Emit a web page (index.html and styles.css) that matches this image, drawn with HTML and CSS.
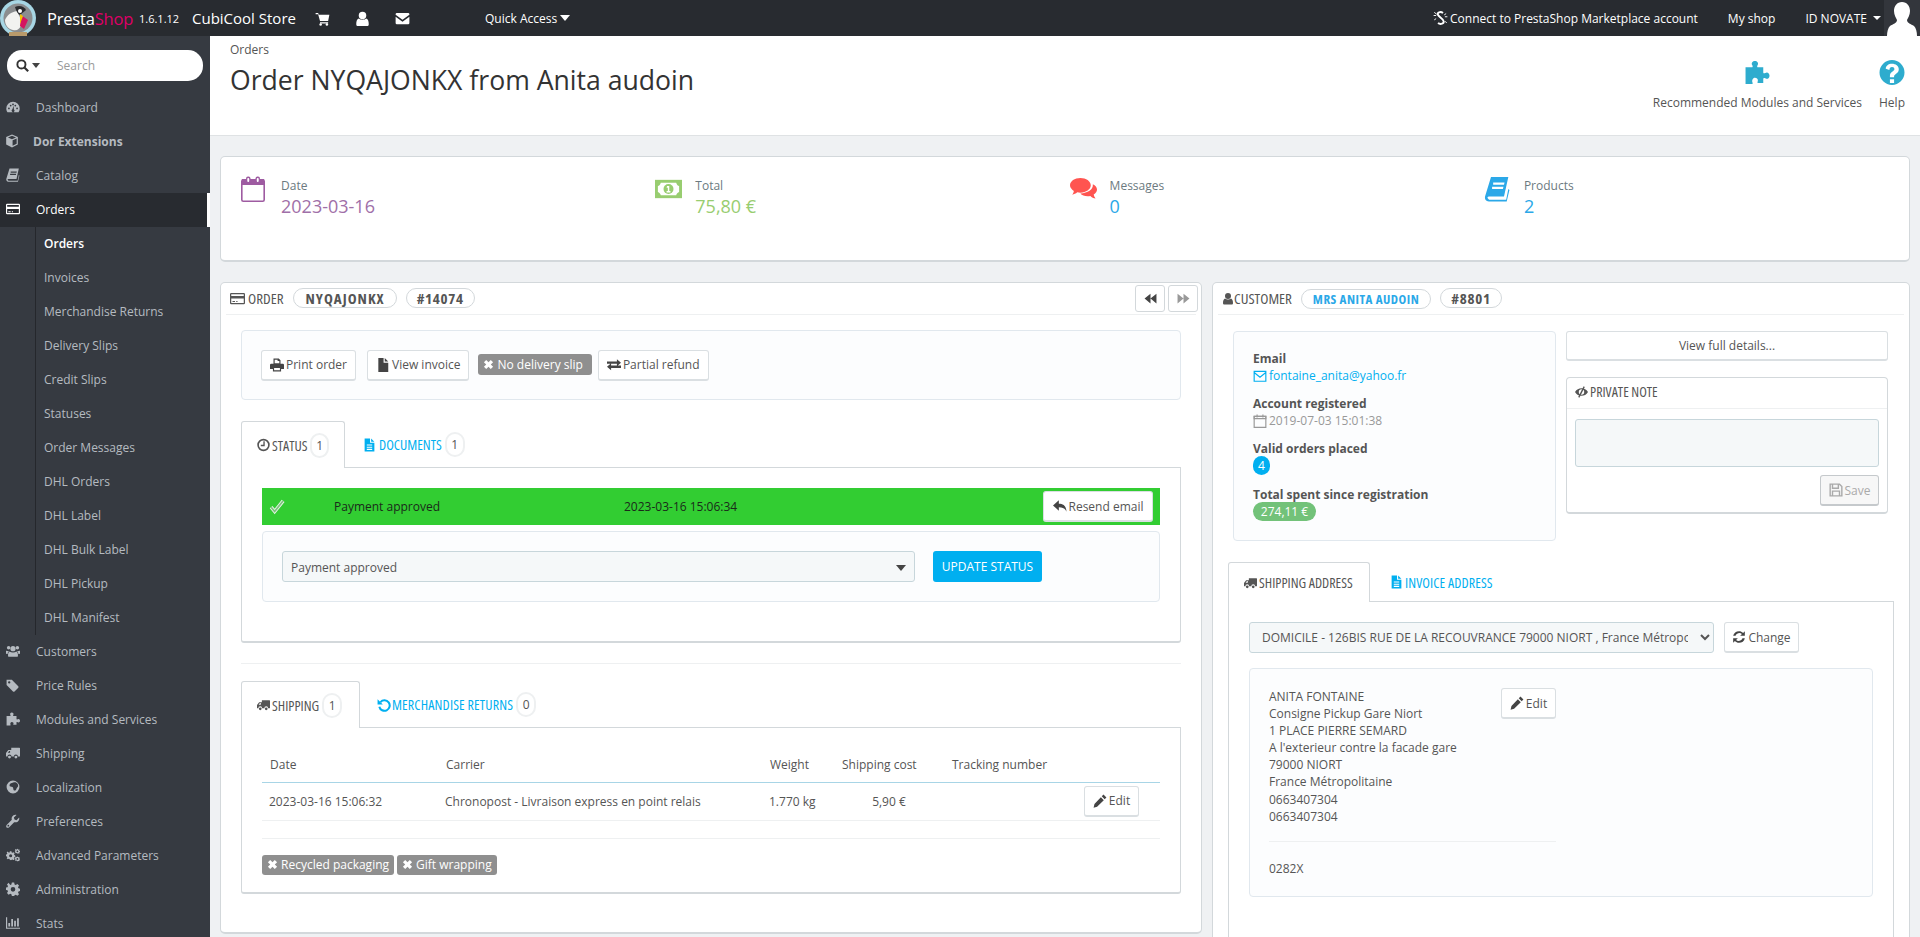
FILE: index.html
```html
<!DOCTYPE html>
<html lang="en">
<head>
<meta charset="utf-8">
<title>Order NYQAJONKX</title>
<link rel="stylesheet" href="styles.css">
</head>
<body>
<svg class="defs" width="0" height="0">
  <defs>
    <symbol id="i-cart" viewBox="0 0 24 24"><path fill="currentColor" d="M1 3h4l1 3h17l-2 10H8L5 5H1zM8 18h13v2H8z"/><circle fill="currentColor" cx="9" cy="21.5" r="2"/><circle fill="currentColor" cx="19" cy="21.5" r="2"/></symbol>
    <symbol id="i-user" viewBox="0 0 24 24"><circle fill="currentColor" cx="12" cy="7" r="6"/><path fill="currentColor" d="M6 12c3 2.500 9 2.500 12 0 3 1 4 5 4 9 0 2-1 3-3 3H5c-2 0-3-1-3-3 0-4 1-8 4-9z"/></symbol>
    <symbol id="i-mail" viewBox="0 0 24 24"><path fill="currentColor" d="M3 3h18a2 2 0 0 1 2 2v1L12 14 1 6V5a2 2 0 0 1 2-2zM1 9l11 8 11-8v10a2 2 0 0 1-2 2H3a2 2 0 0 1-2-2z"/></symbol>
    <symbol id="i-mailo" viewBox="0 0 24 24"><path fill="none" stroke="currentColor" stroke-width="2" d="M2 4h20v17H2zM2 6l10 8 10-8"/></symbol>
    <symbol id="i-search" viewBox="0 0 24 24"><circle fill="none" stroke="currentColor" stroke-width="3.500" cx="10" cy="10" r="7.500"/><path stroke="currentColor" stroke-width="4" d="M15.500 15.500l7 7"/></symbol>
    <symbol id="i-dash" viewBox="0 0 24 24"><path fill="currentColor" fill-rule="evenodd" d="M12 3a11.500 11.500 0 0 1 11.500 11.500c0 3-1 5-2 6.500H2.500c-1-1.500-2-3.500-2-6.500A11.500 11.500 0 0 1 12 3zM5 13a1.500 1.500 0 1 0 0 3 1.500 1.500 0 0 0 0-3zm3-5a1.500 1.500 0 1 0 0 3 1.500 1.500 0 0 0 0-3zm8 0a1.500 1.500 0 1 0 0 3 1.500 1.500 0 0 0 0-3zm3 5a1.500 1.500 0 1 0 0 3 1.500 1.500 0 0 0 0-3zM12 6a1.500 1.500 0 1 0 0 3 1.500 1.500 0 0 0 0-3zm1 4l-2 6a2.500 2.500 0 1 0 2.600.2z"/></symbol>
    <symbol id="i-cube" viewBox="0 0 24 24"><path fill="currentColor" d="M12 1l10 4v13l-10 5-10-5V5zm0 2.200L5 6l7 2.800L19 6zM13 10.600v9.600l7-3.500V7.800z"/></symbol>
    <symbol id="i-book" viewBox="0 0 24 24"><path fill="currentColor" d="M6 1h16l-4 18H4c-1 0-1.500 1-1 1.500S4 22 5 22h15l2-10 1 1-2.500 10.500H4c-2.500 0-4-2-3.500-4.500zM8 6v2h10l.5-2zM7 10v2h10l.5-2z"/></symbol>
    <symbol id="i-card" viewBox="0 0 24 24"><path fill="currentColor" fill-rule="evenodd" d="M2 3h20a2 2 0 0 1 2 2v14a2 2 0 0 1-2 2H2a2 2 0 0 1-2-2V5a2 2 0 0 1 2-2zm0 2v3h20V5zm0 7v7h20v-7zm2 4h4v1.500H4zm6 0h2v1.500h-2z"/></symbol>
    <symbol id="i-users" viewBox="0 0 24 24"><circle fill="currentColor" cx="12" cy="8" r="4.500"/><circle fill="currentColor" cx="4.500" cy="6.500" r="3"/><circle fill="currentColor" cx="19.500" cy="6.500" r="3"/><path fill="currentColor" d="M6 13c3 2 9 2 12 0 2 1 2.500 4 2.500 7 0 1.500-1 2-2 2h-13c-1 0-2-.5-2-2 0-3 .5-6 2.500-7zM0 11c1 1 3 1.500 5 1-1.500 1.500-2 3-2.200 5H1c-.5 0-1-.5-1-1.500zM24 11c-1 1-3 1.500-5 1 1.500 1.500 2 3 2.200 5H23c.5 0 1-.5 1-1.500z"/></symbol>
    <symbol id="i-tags" viewBox="0 0 24 24"><path fill="currentColor" fill-rule="evenodd" d="M1 3h9l11 11c.8.8.8 1.800 0 2.600l-6.400 6.400c-.8.8-1.800.8-2.600 0L1 12zm4.500 2.500a2 2 0 1 0 0 4 2 2 0 0 0 0-4z"/></symbol>
    <symbol id="i-puzzle" viewBox="0 0 24 24"><path fill="currentColor" d="M1 7h6c1 0 1-1 .5-2C6 3 8 1 10 1s4 2 2.500 4c-.5 1-.5 2 .5 2h5v5c0 1 1 1 2 .5 2-1.500 4 .5 4 2.500s-2 4-4 2.500c-1-.5-2-.5-2 .5v4h-5c-1 0-.5-1-.2-1.800.5-2-1-3.200-2.800-3.200S7 19.200 7.500 21.200c.3.800.8 1.800-.2 1.800H1z"/></symbol>
    <symbol id="i-truck" viewBox="0 0 24 24"><path fill="currentColor" d="M9 3h14a1 1 0 0 1 1 1v13a1 1 0 0 1-1 1h-2.500a3.500 3.500 0 0 0-7 0H9.500a3.500 3.500 0 0 0-7 0H1a1 1 0 0 1-1-1v-5l4-5h5zM3 11.500h4V8.500H5.500z"/><circle fill="currentColor" cx="6" cy="19" r="2.500"/><circle fill="currentColor" cx="17" cy="19" r="2.500"/></symbol>
    <symbol id="i-globe" viewBox="0 0 24 24"><path fill="currentColor" fill-rule="evenodd" d="M12 1a11 11 0 1 1 0 22 11 11 0 0 1 0-22zm3 3c-2 0-3 1-5 1S6 7 6 9c0 3 3 2 5 3 2 .5 1 3 2 5s3 1 4 0c1-2 1-3 3-5 1-1 1-3 0-5-1-2-3-3-5-3z"/></symbol>
    <symbol id="i-wrench" viewBox="0 0 24 24"><path fill="currentColor" fill-rule="evenodd" d="M22.500 6c1 3-.5 6-3 7.500-2 1-4 1-5.500.5L5.500 22.500c-1.500 1.500-3.500 1.500-4.500.5s-1-3 .5-4.500L10 10c-.5-2-.5-4 .5-5.500C12 2 15 .5 18 1.500L13.500 6l1 3.500 3.500 1zM4 18.500a1.500 1.500 0 1 0 0 3 1.500 1.500 0 0 0 0-3z"/></symbol>
    <symbol id="i-gear" viewBox="0 0 24 24"><path fill="currentColor" fill-rule="evenodd" d="M10 1h4l.7 3.200 2 .8L19.500 3.300l2.800 2.800-1.700 2.700.8 2 3.100.7v4l-3.100.7-.8 2 1.700 2.700-2.800 2.800-2.800-1.700-2 .8L14 24h-4l-.7-3.200-2-.8-2.800 1.700-2.800-2.800 1.700-2.700-.8-2-3.100-.7v-4l3.100-.7.8-2-1.700-2.700 2.800-2.800L7.300 5l2-.8zM12 8.500a4 4 0 1 0 0 8 4 4 0 0 0 0-8z"/></symbol>
    <symbol id="i-cogs" viewBox="0 0 24 24"><use href="#i-gear" x="0" y="5" width="16" height="16"/><use href="#i-gear" x="15" y="1" width="9" height="9"/><use href="#i-gear" x="15" y="14" width="9" height="9"/></symbol>
    <symbol id="i-bars" viewBox="0 0 24 24"><path fill="currentColor" d="M0 2h2v18h22v2H0zM4 12h3v6H4zM9 5h3v13H9zM14 8h3v10h-3zM19 4h3v14h-3z"/></symbol>
    <symbol id="i-print" viewBox="0 0 24 24"><path fill="currentColor" fill-rule="evenodd" d="M6 1h9l3 3v6H6zM2 10h20a2 2 0 0 1 2 2v7h-5v4H5v-4H0v-7a2 2 0 0 1 2-2zm5 7v4h10v-4zM8 3v6h8V5h-3V3z"/></symbol>
    <symbol id="i-file" viewBox="0 0 24 24"><path fill="currentColor" d="M4 0h9v8h8v16H4zM15 0l6 6h-6z"/></symbol>
    <symbol id="i-filet" viewBox="0 0 24 24"><path fill="currentColor" fill-rule="evenodd" d="M3 0h10v8h8v16H3zM15 0l6 6h-6zM7 11v2h10v-2zM7 15v2h10v-2zM7 19v2h10v-2z"/></symbol>
    <symbol id="i-times" viewBox="0 0 24 24"><path fill="currentColor" d="M7 2l5 5 5-5 5 5-5 5 5 5-5 5-5-5-5 5-5-5 5-5-5-5z"/></symbol>
    <symbol id="i-exch" viewBox="0 0 24 24"><path fill="currentColor" d="M0 7h17V3l7 6-7 6v-4H0zM24 14v4H7v4l-7-6 7-6v4z" transform="translate(0 -1)"/></symbol>
    <symbol id="i-clock" viewBox="0 0 24 24"><circle fill="none" stroke="currentColor" stroke-width="3" cx="12" cy="12" r="10"/><path fill="none" stroke="currentColor" stroke-width="2.500" d="M13 5v8H7"/></symbol>
    <symbol id="i-check" viewBox="0 0 24 24"><path fill="none" stroke="#e8f3e8" stroke-width="5" d="M3 13l5 6L20 4"/><path fill="none" stroke="#7cc47c" stroke-width="2.400" d="M3 13l5 6L20 4"/></symbol>
    <symbol id="i-reply" viewBox="0 0 24 24"><path fill="currentColor" d="M10 2v6c7 0 13 3 13 14-2-6-6-8-13-8v6L0 11z"/></symbol>
    <symbol id="i-undo" viewBox="0 0 24 24"><path fill="none" stroke="currentColor" stroke-width="3.500" d="M6 7a9 9 0 1 1-2 8"/><path fill="currentColor" d="M1 2l9 9H1z"/></symbol>
    <symbol id="i-pencil" viewBox="0 0 24 24"><path fill="currentColor" d="M18 1l5 5-3 3-5-5zM13.500 5.500l5 5L7 22l-6 1.500L2.500 17z"/></symbol>
    <symbol id="i-refresh" viewBox="0 0 24 24"><path fill="currentColor" d="M12 2c3 0 5 1 7 3l3-3v8h-8l3-3c-3-3-9-2-11 3H2c1-5 5-8 10-8zM2 22v-8h8l-3 3c3 3 9 2 11-3h4c-1 5-5 8-10 8-3 0-5-1-7-3z"/></symbol>
    <symbol id="i-back" viewBox="0 0 24 24"><path fill="currentColor" d="M12 3v18L1 12zM23 3v18L12 12z"/></symbol>
    <symbol id="i-fwd" viewBox="0 0 24 24"><path fill="currentColor" d="M1 3v18l11-9zM12 3v18l11-9z"/></symbol>
    <symbol id="i-eye" viewBox="0 0 24 24"><path fill="currentColor" fill-rule="evenodd" d="M0 12c3-5 7-7 12-7s9 2 12 7c-3 5-7 7-12 7S3 17 0 12zm12-5a5 5 0 1 0 0 10 5 5 0 0 0 0-10z"/><path stroke="currentColor" stroke-width="2.500" d="M17 2L7 22"/></symbol>
    <symbol id="i-save" viewBox="0 0 24 24"><path fill="none" stroke="currentColor" stroke-width="2.400" d="M2 2h16l4 4v16H2zM6 2v7h10V2M6 22v-8h12v8"/></symbol>
    <symbol id="i-cal" viewBox="0 0 24 24"><path fill="none" stroke="currentColor" stroke-width="2" d="M2 4h20v19H2z"/><path fill="none" stroke="currentColor" stroke-width="2" d="M2 4h20v4H2z"/><path stroke="currentColor" stroke-width="2" d="M7 1v5M17 1v5"/></symbol>
    <symbol id="i-calfat" viewBox="0 0 27 26"><rect x="0.800" y="3.800" width="22.400" height="21.400" rx="1.500" fill="#fff" stroke="currentColor" stroke-width="1.600"/><path fill="currentColor" d="M1 3h22v6H1z"/><rect x="5" y="0.500" width="4.500" height="7" rx="2" fill="currentColor"/><rect x="14.500" y="0.500" width="4.500" height="7" rx="2" fill="currentColor"/><rect x="6.300" y="2" width="1.900" height="4" rx="0.900" fill="#fff"/><rect x="15.800" y="2" width="1.900" height="4" rx="0.900" fill="#fff"/></symbol>
    <symbol id="i-money" viewBox="0 0 28 19"><path fill="currentColor" d="M0 0h28v19H0z"/><path fill="#fff" d="M6 3h16c.5 2 1.500 3 3 3.500v6c-1.500.5-2.500 1.500-3 3.500H6c-.5-2-1.500-3-3-3.500v-6C4.500 6 5.500 5 6 3z"/><circle cx="14" cy="9.500" r="5.200" fill="currentColor"/><path fill="#fff" d="M12.500 6.500h2.300v5h1.200V13h-4v-1.500h1.300V8.200h-1.300z"/></symbol>
    <symbol id="i-chat" viewBox="0 0 26 21"><path fill="currentColor" d="M10 0c5.500 0 10 3 10 7s-4.500 7-10 7c-1 0-2 0-3-.3C5.500 15 4 15.700 2 16c1-1 1.500-2.200 1.700-3.600C1.500 11 0 9.200 0 7c0-4 4.500-7 10-7z"/><path fill="currentColor" d="M22 6c2.500 1 4 3 4 5 0 2-1.200 3.600-3.200 4.800.2 1.400.8 2.700 1.800 3.900-2-.3-3.700-1.200-5-2.500-1 .2-1.600.3-2.600.3-3 0-5.500-1-7-2.700 7-.2 12.500-3.700 12-8.800z"/></symbol>
    <symbol id="i-help" viewBox="0 0 24 24"><path fill="currentColor" fill-rule="evenodd" d="M12 0a12 12 0 1 1 0 24 12 12 0 0 1 0-24zm-2 18.500v3.500h4v-3.500zM12 3.500c-3.500 0-6 2-6 5l3.500 1c0-1.500 1-2.700 2.500-2.700s2.300.8 2.300 2c0 2-4.300 2.500-4.300 6.200v1.500h4v-1c0-2 4.500-2.500 4.500-6.700 0-3.300-3-5.300-6.500-5.300z"/></symbol>
    <symbol id="i-link" viewBox="0 0 24 24"><path fill="none" stroke="currentColor" stroke-width="3" d="M16 4c-4-3-10-1-8 3 1 3 8 6 9 10 1 4-5 6-9 3"/><path stroke="currentColor" stroke-width="1.500" d="M2 3l4 3M1 8h4M2 15l3-2M21 5l-3 2M23 10h-4M22 20l-3-3"/></symbol>
  </defs>
</svg>

<header class="topbar">
  <div class="logo-disc">
    <svg viewBox="0 0 36 36" class="puffin">
      <circle cx="18" cy="18" r="18" fill="#a7d6e4"/>
      <circle cx="18" cy="18" r="14.500" fill="#8b8d8f"/>
      <path fill="#f2f2f0" d="M5 20c2-5 6-8 12-9 2 5 5 8 4 14-1 4-4 6-8 5-5-1-8-5-8-10z"/>
      <path fill="#2a2b2e" d="M15 7c4-2 9-1 11 3l-6 5c-2-1-4-4-5-8z"/>
      <circle cx="20" cy="11" r="2" fill="#fff"/>
      <path fill="#d5155f" d="M21 15l7 5-4 9-4-3z"/>
      <path fill="#f5c400" d="M20 14l3 2-3 8z"/>
      <path fill="#b99a6b" d="M9 32h18v4H9z"/>
    </svg>
  </div>
  <span class="brand"><span class="brand-a">Presta</span><span class="brand-b">Shop</span></span>
  <span class="version">1.6.1.12</span>
  <span class="store">CubiCool Store</span>
  <span class="top-icons">
    <svg class="ti"><use href="#i-cart"/></svg>
    <svg class="ti"><use href="#i-user"/></svg>
    <svg class="ti"><use href="#i-mail"/></svg>
  </span>
  <span class="quick">Quick Access<i class="caret"></i></span>
  <span class="top-right">
    <span class="tr-item"><svg class="tlink"><use href="#i-link"/></svg>Connect to PrestaShop Marketplace account</span>
    <span class="tr-item tr-gap">My shop</span>
    <span class="tr-item tr-gap2">ID NOVATE<i class="caret small"></i></span>
    <span class="avatar">
      <svg viewBox="0 0 34 36" class="avatar-svg"><path fill="#fff" d="M17 2c5 0 8 4 8 9 0 4-2 7-3 9 0 3 4 4 7 6 2 2 3 6 3 10H2c0-4 1-8 3-10 3-2 7-3 7-6-1-2-3-5-3-9 0-5 3-9 8-9z"/></svg>
    </span>
  </span>
</header>

<div class="shell">
  <nav class="sidebar">
    <div class="search-box">
      <svg class="s-ic"><use href="#i-search"/></svg><i class="caret dark s-caret"></i>
      <span class="s-ph">Search</span>
    </div>
    <ul class="menu">
      <li class="mi"><svg class="m-ic"><use href="#i-dash"/></svg>Dashboard</li>
      <li class="mi mi-bold"><svg class="m-ic m-ic-b"><use href="#i-cube"/></svg>Dor Extensions</li>
      <li class="mi"><svg class="m-ic"><use href="#i-book"/></svg>Catalog</li>
      <li class="mi mi-active"><svg class="m-ic"><use href="#i-card"/></svg>Orders</li>
      <li class="submenu">
        <ul>
          <li class="si si-on">Orders</li>
          <li class="si">Invoices</li>
          <li class="si">Merchandise Returns</li>
          <li class="si">Delivery Slips</li>
          <li class="si">Credit Slips</li>
          <li class="si">Statuses</li>
          <li class="si">Order Messages</li>
          <li class="si">DHL Orders</li>
          <li class="si">DHL Label</li>
          <li class="si">DHL Bulk Label</li>
          <li class="si">DHL Pickup</li>
          <li class="si">DHL Manifest</li>
        </ul>
      </li>
      <li class="mi"><svg class="m-ic"><use href="#i-users"/></svg>Customers</li>
      <li class="mi"><svg class="m-ic"><use href="#i-tags"/></svg>Price Rules</li>
      <li class="mi"><svg class="m-ic"><use href="#i-puzzle"/></svg>Modules and Services</li>
      <li class="mi"><svg class="m-ic"><use href="#i-truck"/></svg>Shipping</li>
      <li class="mi"><svg class="m-ic"><use href="#i-globe"/></svg>Localization</li>
      <li class="mi"><svg class="m-ic"><use href="#i-wrench"/></svg>Preferences</li>
      <li class="mi"><svg class="m-ic"><use href="#i-cogs"/></svg>Advanced Parameters</li>
      <li class="mi"><svg class="m-ic"><use href="#i-gear"/></svg>Administration</li>
      <li class="mi"><svg class="m-ic"><use href="#i-bars"/></svg>Stats</li>
    </ul>
  </nav>

  <main class="content">
    <section class="page-head">
      <div class="ph-left">
        <div class="crumb">Orders</div>
        <h1 class="title">Order NYQAJONKX from Anita audoin</h1>
      </div>
      <div class="ph-right">
        <div class="ph-act"><svg class="ph-ic"><use href="#i-puzzle"/></svg><span>Recommended Modules and Services</span></div>
        <div class="ph-act"><svg class="ph-ic"><use href="#i-help"/></svg><span>Help</span></div>
      </div>
    </section>

    <div class="page-body">
      <section class="kpis">
        <div class="kpi"><svg class="k-ic c-purple"><use href="#i-calfat"/></svg><div><div class="k-l">Date</div><div class="k-v v-purple">2023-03-16</div></div></div>
        <div class="kpi"><svg class="k-ic c-green"><use href="#i-money"/></svg><div><div class="k-l">Total</div><div class="k-v c-green">75,80 €</div></div></div>
        <div class="kpi"><svg class="k-ic c-red"><use href="#i-chat"/></svg><div><div class="k-l">Messages</div><div class="k-v c-blue">0</div></div></div>
        <div class="kpi"><svg class="k-ic c-blue"><use href="#i-book"/></svg><div><div class="k-l">Products</div><div class="k-v c-blue">2</div></div></div>
      </section>

      <div class="columns">
        <section class="panel panel-order">
          <div class="p-head">
            <svg class="h-ic"><use href="#i-card"/></svg><span class="h-t">ORDER</span>
            <span class="pill">NYQAJONKX</span><span class="pill pill-id">#14074</span>
            <span class="pager"><span class="pg"><svg class="pg-ic"><use href="#i-back"/></svg></span><span class="pg pg-off"><svg class="pg-ic"><use href="#i-fwd"/></svg></span></span>
          </div>
          <div class="well actions">
            <span class="btn"><svg class="b-ic"><use href="#i-print"/></svg>Print order</span>
            <span class="btn"><svg class="b-ic"><use href="#i-file"/></svg>View invoice</span>
            <span class="tag tag-lg"><svg class="tag-ic"><use href="#i-times"/></svg>No delivery slip</span>
            <span class="btn btn-tight"><svg class="b-ic"><use href="#i-exch"/></svg>Partial refund</span>
          </div>

          <div class="tabs tabs-status">
            <span class="tab tab-on tab-w1"><svg class="t-ic"><use href="#i-clock"/></svg>STATUS<b class="count">1</b></span>
            <span class="tab tab-link"><svg class="t-ic"><use href="#i-filet"/></svg>DOCUMENTS<b class="count">1</b></span>
          </div>
          <div class="tab-body status-body">
            <div class="status-row">
              <svg class="st-check"><use href="#i-check"/></svg>
              <span class="st-name">Payment approved</span>
              <span class="st-date">2023-03-16 15:06:34</span>
              <span class="btn st-btn"><svg class="b-ic"><use href="#i-reply"/></svg>Resend email</span>
            </div>
            <div class="well status-form">
              <div class="fake-select fs-status">Payment approved<i class="caret dark"></i></div>
              <span class="btn-primary">UPDATE STATUS</span>
            </div>
          </div>

          <div class="hr hr-order"></div>

          <div class="tabs tabs-ship">
            <span class="tab tab-on tab-w2"><svg class="t-ic"><use href="#i-truck"/></svg>SHIPPING<b class="count">1</b></span>
            <span class="tab tab-link"><svg class="t-ic"><use href="#i-undo"/></svg>MERCHANDISE RETURNS<b class="count">0</b></span>
          </div>
          <div class="tab-body ship-body">
            <table class="ship-table">
              <thead>
                <tr><th class="c1">Date</th><th class="c2">Carrier</th><th class="c3">Weight</th><th class="c4">Shipping cost</th><th class="c5">Tracking number</th><th class="c6"></th></tr>
              </thead>
              <tbody>
                <tr><td class="c1">2023-03-16 15:06:32</td><td class="c2">Chronopost - Livraison express en point relais</td><td class="c3">1.770 kg</td><td class="c4 tc">5,90 €</td><td class="c5"></td><td class="c6"><span class="btn btn-edit"><svg class="b-ic"><use href="#i-pencil"/></svg>Edit</span></td></tr>
              </tbody>
            </table>
            <div class="hr hr-ship"></div>
            <div class="tag-row">
              <span class="tag"><svg class="tag-ic"><use href="#i-times"/></svg>Recycled packaging</span>
              <span class="tag"><svg class="tag-ic"><use href="#i-times"/></svg>Gift wrapping</span>
            </div>
          </div>
        </section>

        <section class="panel panel-customer">
          <div class="p-head">
            <svg class="h-ic"><use href="#i-user"/></svg><span class="h-t">CUSTOMER</span>
            <span class="pill pill-blue">MRS ANITA AUDOIN</span><span class="pill pill-id">#8801</span>
          </div>
          <div class="cust-grid">
            <div class="well cust-info">
              <dl>
                <dt>Email</dt>
                <dd class="link"><svg class="d-ic"><use href="#i-mailo"/></svg>fontaine_anita@yahoo.fr</dd>
                <dt>Account registered</dt>
                <dd class="muted"><svg class="d-ic"><use href="#i-cal"/></svg>2019-07-03 15:01:38</dd>
                <dt>Valid orders placed</dt>
                <dd><span class="badge b-blue">4</span></dd>
                <dt>Total spent since registration</dt>
                <dd><span class="badge b-green">274,11 €</span></dd>
              </dl>
            </div>
            <div class="cust-side">
              <span class="btn btn-block">View full details...</span>
              <div class="note">
                <div class="note-head"><svg class="t-ic"><use href="#i-eye"/></svg>PRIVATE NOTE</div>
                <div class="note-body">
                  <div class="textarea"></div>
                  <div class="note-foot"><span class="btn btn-save"><svg class="b-ic"><use href="#i-save"/></svg>Save</span></div>
                </div>
              </div>
            </div>
          </div>

          <div class="addr-wrap">
            <div class="tabs tabs-addr">
              <span class="tab tab-on tab-w3"><svg class="t-ic"><use href="#i-truck"/></svg>SHIPPING ADDRESS</span>
              <span class="tab tab-link"><svg class="t-ic"><use href="#i-filet"/></svg>INVOICE ADDRESS</span>
            </div>
            <div class="tab-body addr-body">
              <div class="addr-pick">
                <select class="fs-addr"><option>DOMICILE - 126BIS RUE DE LA RECOUVRANCE 79000 NIORT , France Métropolitaine</option></select>
                <span class="btn btn-change"><svg class="b-ic"><use href="#i-refresh"/></svg>Change</span>
              </div>
              <div class="well addr-card">
                <div class="addr-main">
                  <div class="addr-top">
                    <div class="addr-lines">
                      <div>ANITA FONTAINE</div>
                      <div>Consigne Pickup Gare Niort</div>
                      <div>1 PLACE PIERRE SEMARD</div>
                      <div>A l'exterieur contre la facade gare</div>
                      <div>79000 NIORT</div>
                      <div>France Métropolitaine</div>
                      <div>0663407304</div>
                      <div>0663407304</div>
                    </div>
                    <span class="btn btn-edit btn-up"><svg class="b-ic"><use href="#i-pencil"/></svg>Edit</span>
                  </div>
                  <div class="hr hr-addr"></div>
                  <div class="addr-code">0282X</div>
                </div>
              </div>
            </div>
          </div>
        </section>
      </div>
    </div>
  </main>
</div>
</body>
</html>
```

FILE: styles.css
```css
* { box-sizing: border-box; }
html, body { margin: 0; padding: 0; height: 937px; overflow: hidden; }
body { font-family: "Open Sans", "Liberation Sans", sans-serif; font-size: 12px; color: #555; background: #eff1f3; }
ul { list-style: none; margin: 0; padding: 0; }
svg { display: inline-block; }
.defs { position: absolute; }

.caret { display: inline-block; width: 0; height: 0; border-left: 5px solid transparent; border-right: 5px solid transparent; border-top: 6px solid #fff; margin-left: 3px; vertical-align: 2px; }
.caret.small { border-left-width: 4px; border-right-width: 4px; border-top-width: 4px; margin-left: 6px; }
.caret.dark { border-top-color: #444; }
.s-caret { border-left-width: 4px; border-right-width: 4px; border-top-width: 5px; }

/* Top bar */
.topbar { height: 36px; background: #282b30; color: #fff; display: flex; align-items: center; }
.logo-disc { width: 36px; height: 36px; flex: none; }
.puffin { width: 36px; height: 36px; display: block; }
.brand { font-size: 16.500px; margin-left: 11px; letter-spacing: -0.2px; width: 88px; flex: none; }
.brand-a { color: #fff; }
.brand-b { color: #df0067; }
.version { font-size: 11px; margin-left: 4px; width: 48px; flex: none; font-weight: 400; }
.store { font-size: 15px; margin-left: 5px; width: 123px; flex: none; }
.top-icons { display: flex; gap: 25px; flex: none; }
.ti { width: 15px; height: 15px; color: #fff; }
.quick { font-size: 12px; margin-left: 75px; }
.top-right { margin-left: auto; display: flex; align-items: center; height: 36px; font-size: 12px; }
.tr-item { display: flex; align-items: center; white-space: nowrap; }
.tlink { width: 15px; height: 16px; margin-right: 2px; }
.tr-gap { margin-left: 30px; }
.tr-gap2 { margin-left: 30px; }
.avatar { width: 36px; height: 36px; margin-left: 3px; background: #33363c; display: block; }
.avatar-svg { width: 36px; height: 36px; display: block; }

/* Layout */
.shell { display: flex; height: 901px; }
.sidebar { width: 210px; flex: none; background: #363a41; color: #b5bac0; padding-top: 14px; overflow: hidden; }
.search-box { margin: 0 7px 10px; height: 31px; background: #fff; border-radius: 15px; display: flex; align-items: center; padding-left: 9px; color: #333; }
.s-ic { width: 13px; height: 13px; color: #333; }
.s-ph { margin-left: 17px; color: #9a9a9a; font-size: 12px; }
.mi { height: 34px; display: flex; align-items: center; padding: 0 0 2px 36px; position: relative; white-space: nowrap; }
.mi-bold { font-weight: 700; padding-left: 33px; }
.m-ic { position: absolute; left: 6px; top: 9px; width: 14px; height: 14px; color: #b5bac0; }
.m-ic-b { left: 5px; }
.mi-active { background: #282b30; color: #fff; border-right: 3px solid #fff; }
.mi-active .m-ic { color: #fff; }
.submenu { margin-left: 35px; border-left: 1px solid #25272c; }
.si { height: 34px; display: flex; align-items: center; padding: 0 0 1px 8px; white-space: nowrap; }
.si-on { color: #fff; font-weight: 600; }

/* Page header */
.content { flex: 1; min-width: 0; }
.page-head { height: 100px; background: #fff; border-bottom: 1px solid #dfe2e4; display: flex; justify-content: space-between; padding: 5px 15px 0 20px; }
.crumb { font-size: 12px; line-height: 18px; color: #555; }
.title { font-size: 26.600px; font-weight: 400; color: #333; margin: 3px 0 0; line-height: 36px; white-space: nowrap; }
.ph-right { display: flex; gap: 17px; padding-top: 19px; }
.ph-act { display: flex; flex-direction: column; align-items: center; gap: 9px; white-space: nowrap; color: #555; font-size: 12px; }
.ph-ic { width: 26px; height: 25px; color: #2eacce; }

.page-body { padding: 20px 10px 0; }
.kpis { height: 106px; background: #fff; border: 1px solid #d3d8db; border-bottom-width: 2px; border-radius: 5px; display: grid; grid-template-columns: repeat(4, 414.300px); padding-top: 20px; }
.kpi { display: flex; padding-left: 20px; gap: 13px; }
.k-ic { width: 27px; height: 26px; margin-top: -1px; flex: none; }
.k-l { font-size: 12px; line-height: 18px; color: #6c7a7f; }
.k-v { font-size: 18px; line-height: 22px; }
.c-purple { color: #9e5ba1; }
.v-purple { color: #a06fa8; }
.c-green { color: #98cd70; }
.c-red { color: #ff5450; }
.c-blue { color: #2ba8e8; }

.columns { display: flex; gap: 10px; margin-top: 20px; align-items: flex-start; }
.panel { background: #fff; border: 1px solid #d3d8db; border-bottom-width: 2px; border-radius: 5px; padding: 0 5px; }
.panel-order { width: 982px; height: 652px; flex: none; }
.panel-customer { flex: 1; height: 760px; min-width: 0; }

.p-head { height: 32px; border-bottom: 1px solid #eef0f1; display: flex; align-items: center; padding-bottom: 1px; position: relative; }
.p-head > .h-ic { width: 15px; height: 15px; color: #555; margin-left: 4px; }
.panel-customer .p-head > .h-ic { width: 12px; }
.h-t { font-stretch: 75%; font-size: 15px; color: #555; margin-left: 3px; margin-right: 10px; }
.panel-customer .h-t { margin-left: 0; margin-right: 9px; }
.pill { font-stretch: 75%; font-weight: 700; font-size: 15px; letter-spacing: 1px; color: #555; height: 20px; line-height: 18px; border: 1px solid #d3d8db; border-radius: 10px; padding: 0 11px; margin-right: 9px; background: #fff; }
.pill-id { padding: 0 10px; letter-spacing: 0.700px; }
.pill-blue { color: #2ba8e8; font-size: 13px; letter-spacing: 0.5px; margin-top: 2px; }
.pager { margin-left: auto; display: flex; gap: 3px; margin-right: -2px; }
.pg { width: 30px; height: 27px; border: 1px solid #d3d8db; border-radius: 3px; display: flex; align-items: center; justify-content: center; color: #444; }
.pg-off { color: #999; }
.pg-ic { width: 13px; height: 13px; }

.well { background: #fcfdfe; border: 1px solid #e1e8ee; border-radius: 4px; }
.actions { margin: 15px 15px 0; height: 70px; display: flex; align-items: center; padding-left: 19px; }
.btn { display: inline-flex; align-items: center; justify-content: center; height: 31px; background: #fff; border: 1px solid #dadfe2; border-bottom-width: 2px; border-radius: 3px; padding: 0 8px; color: #555; font-size: 12px; white-space: nowrap; }
.actions .btn { margin-right: 11px; }
.actions .btn-tight { margin-left: -4px; margin-right: 0; }
.b-ic { width: 14px; height: 14px; margin-right: 2px; color: #444; flex: none; }
.tag { display: inline-flex; align-items: center; height: 20px; padding: 0 5px; background: #8f8f8f; color: #fff; border-radius: 3px; font-size: 12px; white-space: nowrap; }
.tag-lg { height: 21px; padding: 0 9px 0 5px; margin-right: 10px; margin-left: -2px; margin-top: -2px; }
.tag-ic { width: 11px; height: 11px; margin-right: 3px; color: #fff; flex: none; }

.tabs { display: flex; height: 46px; margin: 0 15px; position: relative; z-index: 1; }
.tabs-status { margin-top: 21px; }
.tab { display: flex; align-items: center; height: 47px; padding: 0 15px; font-stretch: 75%; font-size: 14px; white-space: nowrap; color: #555; }
.tab-on { background: #fff; border: 1px solid #d3d8db; border-bottom: 0; border-radius: 3px 3px 0 0; }
.tab-w1 { width: 104px; }
.tab-w2 { width: 119px; }
.tab-w3 { width: 142px; }
.tab-link { color: #00aff0; padding-left: 18px; }
.tab-link .t-ic { color: #00aff0; margin-right: 3px; }
.tabs-ship .tab-link { padding-left: 17px; letter-spacing: 0.150px; }
.tabs-ship .tab-link .t-ic { width: 14px; margin-right: 1px; }
.tabs-addr .tab-link { padding-left: 20px; letter-spacing: 0.100px; }
.tabs-addr .tab-link .t-ic { margin-right: 2px; }
.t-ic { width: 13px; height: 14px; margin-right: 2px; color: #555; flex: none; }
.count { font-stretch: 100%; font-weight: 400; font-size: 12px; letter-spacing: 0; color: #555; width: 20px; height: 25px; line-height: 21px; text-align: center; border: 2px solid #eef0f1; border-radius: 10px; margin-left: 3px; background: #fff; }
.tab-body { margin: 0 15px; border: 1px solid #d3d8db; border-bottom-width: 2px; border-radius: 0 0 3px 3px; background: #fff; }

.status-body { height: 176px; padding: 20px 20px 0; }
.status-row { height: 37px; background: #32cd32; display: flex; align-items: center; color: #1a2a1a; position: relative; }
.st-check { width: 17px; height: 17px; margin-left: 7px; flex: none; }
.st-name { margin-left: 48px; width: 290px; flex: none; }
.st-date { flex: none; }
.st-btn { margin-left: auto; margin-right: 7px; width: 110px; }
.status-form { margin-top: 6px; height: 71px; display: flex; align-items: center; padding-left: 19px; gap: 18px; }
.fake-select { height: 31px; background: #f5f8f9; border: 1px solid #c7d6db; border-radius: 3px; display: flex; align-items: center; justify-content: space-between; padding: 2px 8px 0; color: #555; font-size: 12px; }
.fs-status { width: 633px; }
.btn-primary { width: 109px; height: 31px; background: #00aff0; color: #fff; border-radius: 3px; display: flex; align-items: center; justify-content: center; font-size: 12px; font-weight: 400; }
.hr { height: 1px; background: #eef0f1; }
.hr-order { margin: 20px 15px 17px; }

.ship-body { height: 167px; padding: 20px 20px 0; }
.ship-table { width: 100%; border-collapse: collapse; table-layout: fixed; }
.ship-table th { font-weight: 400; text-align: left; height: 34px; padding: 0 8px; border-bottom: 1px solid #a8d5e6; color: #555; }
.ship-table td { height: 38px; padding: 0 7px; border-bottom: 1px solid #eef0f1; color: #555; }
.c1 { width: 176px; }
.c2 { width: 324px; }
.c3 { width: 72px; }
.c4 { width: 110px; }
.c5 { width: 140px; }
.tc { text-align: center; }
.c6 .btn-edit { margin-left: 0; }
.btn-edit { width: 55px; }
.btn-up { margin-top: -1px; }
.ship-table .c6 { text-align: left; padding: 0; }
.ship-table td.c4 { padding: 0; }
.hr-ship { margin-top: 17px; }
.tag-row { margin-top: 16px; display: flex; gap: 3px; }

.cust-grid { display: flex; gap: 10px; margin: 16px 0 0 15px; width: 655px; align-items: flex-start; }
.cust-info { width: 323px; height: 210px; padding: 18px 20px 0 19px; flex: none; }
dl { margin: 0; }
dt { font-weight: 700; line-height: 17px; color: #555; }
dd { margin: 0 0 11px; line-height: 17px; min-height: 17px; display: flex; align-items: center; }
.link { color: #00aff0; }
.muted { color: #999; }
.d-ic { width: 14px; height: 14px; margin-right: 2px; flex: none; }
.muted .d-ic { color: #999; }
.badge { display: inline-block; height: 19px; line-height: 19px; border-radius: 10px; color: #fff; text-align: center; font-size: 12px; padding: 0 5px; margin-top: -1px; }
.b-blue { background: #00aff0; width: 17px; padding: 0; }
.b-green { background: #72c279; width: 63px; padding: 0; }
.cust-side { flex: 1; min-width: 0; display: flex; flex-direction: column; gap: 16px; }
.btn-block { width: 100%; height: 30px; }
.note { border: 1px solid #d3d8db; border-bottom-width: 2px; border-radius: 4px; height: 137px; }
.note-head { height: 31px; border-bottom: 1px solid #eef0f1; display: flex; align-items: center; padding: 0 0 3px 8px; font-stretch: 75%; font-size: 14px; color: #555; }
.note-body { padding: 10px 8px 0; }
.textarea { height: 48px; background: #f5f8f9; border: 1px solid #c7d6db; border-radius: 3px; }
.note-foot { display: flex; justify-content: flex-end; margin-top: 8px; }
.btn-save { width: 59px; color: #aaa; background: #f7f7f7; border-color: #c5c9cc; }
.btn-save .b-ic { color: #aaa; }

.addr-wrap { margin-top: 21px; }
.tabs-addr { height: 39px; margin: 0 0 0 10px; }
.tabs-addr .tab { height: 40px; }
.addr-body { margin: 0 10px 0 10px; height: 380px; padding: 20px 20px 0; border-bottom: 0; }
.addr-pick { display: flex; gap: 10px; }
.fs-addr { width: 465px; height: 31px; padding: 0 9px 0 8px; flex: none; font-family: "Open Sans", sans-serif; font-size: 12px; color: #555; background-color: #f5f8f9; border: 1px solid #c7d6db; border-radius: 3px; }
.btn-change { width: 75px; }
.addr-card { margin-top: 15px; height: 229px; padding: 20px 20px 0 19px; width: 624px; }
.addr-main { width: 287px; }
.addr-top { display: flex; justify-content: space-between; align-items: flex-start; }
.addr-lines { line-height: 17.100px; color: #555; margin-top: -1px; }
.hr-addr { margin-top: 16px; }
.addr-code { margin-top: 18px; line-height: 17px; }
```
